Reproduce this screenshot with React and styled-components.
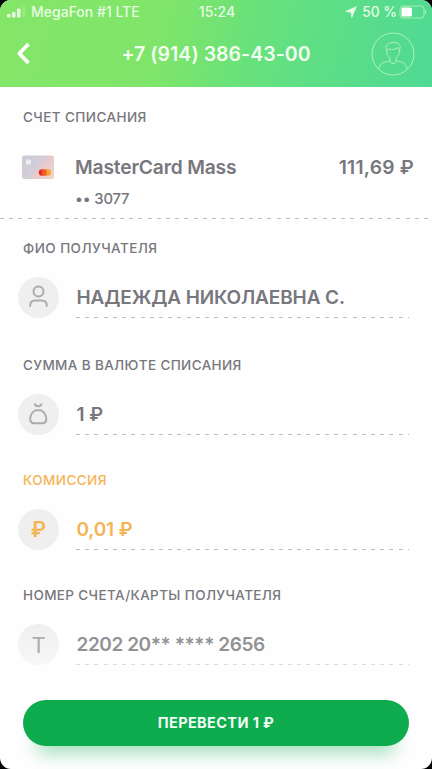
import React from 'react';
import styled, { createGlobalStyle } from 'styled-components';

const Global = createGlobalStyle`
  * { box-sizing: border-box; }
  body { margin: 0; background: #000; font-family: Inter, sans-serif; }
`;

const Screen = styled.div`
  width: 432px;
  height: 769px;
  display: flex;
  flex-direction: column;
  overflow: hidden;
  border-radius: 11px;
  background: #fefefe;
  color: #77777d;
`;

const Header = styled.header`
  height: 87px;
  flex: none;
  background: linear-gradient(104deg, #84e667 0%, #7fe56a 38%, #66e17d 60%, #4ed995 100%);
  color: #f2fdf0;
`;

const StatusBar = styled.div`
  height: 23px;
  display: grid;
  grid-template-columns: 1fr auto 1fr;
  align-items: center;
  padding: 0 5px 0 7px;
  color: #e8fbe4;
`;

const StatusGroup = styled.div`
  display: flex;
  align-items: center;
  justify-content: ${(p) => (p.$end ? 'flex-end' : 'flex-start')};
`;

const Text = styled.span`
  font-size: ${(p) => p.$size}px;
  font-weight: ${(p) => p.$weight || 500};
  letter-spacing: ${(p) => p.$spacing || 0}px;
  line-height: 24px;
  white-space: nowrap;
`;

const Signal = styled.svg`
  width: 20px;
  height: 12px;
  margin-right: 4px;
`;

const Arrow = styled.svg`
  width: 12px;
  height: 12px;
  margin-right: 5px;
`;

const Battery = styled.svg`
  width: 28px;
  height: 14px;
  margin-left: 2px;
`;

const NavBar = styled.div`
  height: 61px;
  display: grid;
  grid-template-columns: 44px 1fr 44px;
  align-items: center;
  justify-items: center;
  padding: 0 17px 0 14px;
`;

const BackIcon = styled.svg`
  width: 20px;
  height: 24px;
  justify-self: start;
`;

const Title = styled.h1`
  margin: 0 0 0 3px;
  font-size: 19.5px;
  font-weight: 600;
  line-height: 24px;
  letter-spacing: 0.03px;
  white-space: nowrap;
`;

const Avatar = styled.svg`
  width: 44px;
  height: 44px;
`;

const dashes = 'repeating-linear-gradient(90deg, #bebec2 0 4px, transparent 4px 9.22px)';

const Account = styled.section`
  height: 131.5px;
  flex: none;
  padding: 20.5px 18px 0 22px;
  background: ${dashes} 0 100% / 100% 1px no-repeat;
`;

const Label = styled.h2`
  margin: 0 0 0 ${(p) => p.$indent || 0}px;
  font-size: 13.5px;
  font-weight: 550;
  line-height: 18px;
  letter-spacing: ${(p) => p.$spacing}px;
  white-space: nowrap;
`;

const AccountRow = styled.div`
  height: 24px;
  margin-top: 29px;
  display: grid;
  grid-template-columns: 53px 1fr auto;
  align-items: center;
`;

const Card = styled.svg`
  width: 32px;
  height: 24px;
`;

const CardNumber = styled.div`
  margin: 7px 0 0 53px;
  line-height: 24px;
`;

const Field = styled.section`
  height: ${(p) => p.$height}px;
  flex: none;
  padding: 20px 23px 0 18px;
  color: ${(p) => p.$color || 'inherit'};
`;

const FieldRow = styled.div`
  height: 41px;
  margin-top: 20px;
  display: grid;
  grid-template-columns: 41px 1fr;
  column-gap: 17px;
`;

const Bubble = styled.div`
  border-radius: 50%;
  display: flex;
  align-items: center;
  justify-content: center;
  background: ${(p) => (p.$faded ? 'linear-gradient(#efefef, #f7f7f7)' : '#efeff0')};
  color: ${(p) => p.$color || '#acacae'};
`;

const Glyph = styled.svg`
  width: 24px;
  height: 24px;
`;

const Value = styled.div`
  display: flex;
  align-items: center;
  padding: 1px 0 0 0.5px;
  color: ${(p) => (p.$faded ? '#929296' : 'inherit')};
  background: ${dashes} 0 100% / 100% 1px no-repeat;
  ${(p) => p.$faded && 'background-image: repeating-linear-gradient(90deg, #dcdcde 0 4px, transparent 4px 9.22px);'}
`;

const Submit = styled.button`
  width: 386px;
  height: 46px;
  flex: none;
  margin: 0 0 0 23px;
  padding: 0;
  border: 0;
  border-radius: 23px;
  background: #0eab4f;
  color: #f0fbf3;
  font-family: inherit;
  box-shadow: 0 20px 18px -13px rgba(14, 171, 79, 0.4);
`;

const PersonGlyph = () => (
  <Glyph viewBox="0 0 24 24" fill="none" stroke="currentColor" strokeWidth="2" strokeLinecap="round">
    <circle cx="11.5" cy="6.500" r="5" />
    <path d="M3.200 21v-.5c0-3 2-5 5-5h6.600c3 0 5 2 5 5v.5" />
  </Glyph>
);

const BagGlyph = () => (
  <Glyph viewBox="0 0 24 24" fill="none" stroke="currentColor" strokeWidth="2" strokeLinecap="round" strokeLinejoin="round">
    <path d="M8 2.200c.5 2.600 5.800 2.600 6.300 0M8.500 8.300h5.500C17.300 9.900 19.300 13.500 19.300 17.300c0 2.800-1.500 4-4.300 4H7.500c-2.800 0-4.300-1.200-4.300-4C3.200 13.500 5.200 9.900 8.500 8.300Z" />
  </Glyph>
);

const fields = [
  { label: 'ФИО ПОЛУЧАТЕЛЯ', labelSpacing: 0.44, value: 'НАДЕЖДА НИКОЛАЕВНА С.', spacing: -0.12, height: 117, icon: <PersonGlyph /> },
  { label: 'СУММА В ВАЛЮТЕ СПИСАНИЯ', labelSpacing: 0.37, value: '1 ₽', spacing: 0, height: 115.75, icon: <BagGlyph /> },
  { label: 'КОМИССИЯ', labelSpacing: 0.44, value: '0,01 ₽', spacing: -0.15, height: 115, color: '#f5b454', icon: <Text $size={21} $weight={600}>₽</Text> },
  { label: 'НОМЕР СЧЕТА/КАРТЫ ПОЛУЧАТЕЛЯ', labelSpacing: 0.37, value: '2202 20** **** 2656', spacing: -0.43, height: 133.75, faded: true, icon: <Text $size={22} $weight={400}>T</Text> },
];

export default function App() {
  return (
    <>
      <Global />
      <Screen>
        <Header>
          <StatusBar>
            <StatusGroup>
              <Signal viewBox="0 0 20 12" fill="currentColor">
                <rect x="0" y="8" width="3.500" height="3.500" rx="1" />
                <rect x="5" y="6" width="3.500" height="5.500" rx="1" />
                <rect x="10" y="2.500" width="3.500" height="9" rx="1" />
                <rect x="15" y="0.500" width="3.500" height="11" rx="1" opacity="0.2" />
              </Signal>
              <Text $size={14}>MegaFon #1 LTE</Text>
            </StatusGroup>
            <Text $size={14}>15:24</Text>
            <StatusGroup $end>
              <Arrow viewBox="0 0 12 12" fill="currentColor"><path d="M11.500.5 6.800 11.500 6 6.200.5 5.400Z" stroke="currentColor" strokeWidth="0.6" /></Arrow>
              <Text $size={13.8}>50 %</Text>
              <Battery viewBox="0 0 28 14">
                <rect x="1" y="1" width="24" height="12" rx="3" fill="none" stroke="#a9efb1" />
                <rect x="2.500" y="2.500" width="10.500" height="9" rx="1.500" fill="#fff" />
                <path d="M26.500 5v4" stroke="#a9efb1" />
              </Battery>
            </StatusGroup>
          </StatusBar>
          <NavBar>
            <BackIcon viewBox="0 0 20 24" fill="none" stroke="#fff" strokeWidth="3.800" strokeLinejoin="round">
              <path d="m14.500 2-9.200 9.500 9.200 9.500" />
            </BackIcon>
            <Title>+7 (914) 386-43-00</Title>
            <Avatar viewBox="0 0 44 44" fill="none" stroke="#b7f3bd" strokeWidth="0.9">
              <circle cx="22" cy="22" r="21" />
              <path d="M8 37c0-5 5-7.500 11-8 0 2 1.500 2.500 3 2.500s3-.5 3-2.500c6 .5 11 3 11 8M19 29v-3c-2.500-2-3.500-4.500-3.500-8-1.500-4 .5-7 6.500-7.500 6-.3 8.500 3 6.500 7.500 0 3.500-1 6-3.500 8v3M15.500 18.500l2-1.500c4 1 7 .5 9.200-1.500l1.800 3" />
            </Avatar>
          </NavBar>
        </Header>
        <Account>
          <Label $indent={1} $spacing={0.42}>СЧЕТ СПИСАНИЯ</Label>
          <AccountRow>
            <Card viewBox="0 0 32 24">
              <defs>
                <linearGradient id="card" x1="0" y1="0" x2="1" y2="0.6">
                  <stop offset="0" stopColor="#cbcbd6" />
                  <stop offset="0.58" stopColor="#d4ced8" />
                  <stop offset="0.65" stopColor="#e7c9cc" />
                  <stop offset="1" stopColor="#efd0ca" />
                </linearGradient>
              </defs>
              <rect y="0.5" width="32" height="23.500" rx="2.500" fill="url(#card)" />
              <rect x="4" y="4.500" width="5" height="5" rx="1.500" fill="#ececf1" />
              <circle cx="20" cy="17.500" r="3.200" fill="#e9262a" />
              <circle cx="25.700" cy="17.500" r="3.200" fill="#f7a43a" />
              <rect x="20" y="14.400" width="4.500" height="6.200" fill="#f25b21" />
            </Card>
            <Text $size={19.2} $weight={560} $spacing={-0.16}>MasterCard Mass</Text>
            <Text $size={19.2} $weight={560} $spacing={0.25}>111,69 ₽</Text>
          </AccountRow>
          <CardNumber><Text $size={14.8} $weight={550} $spacing={-0.15}>•• 3077</Text></CardNumber>
        </Account>
        {fields.map((f) => (
          <Field key={f.label} $height={f.height} $color={f.color}>
            <Label $indent={5} $spacing={f.labelSpacing}>{f.label}</Label>
            <FieldRow>
              <Bubble $faded={f.faded} $color={f.color}>{f.icon}</Bubble>
              <Value $faded={f.faded}><Text $size={19} $weight={560} $spacing={f.spacing}>{f.value}</Text></Value>
            </FieldRow>
          </Field>
        ))}
        <Submit><Text $size={14.5} $weight={650} $spacing={0.38}>ПЕРЕВЕСТИ 1 ₽</Text></Submit>
      </Screen>
    </>
  );
}
